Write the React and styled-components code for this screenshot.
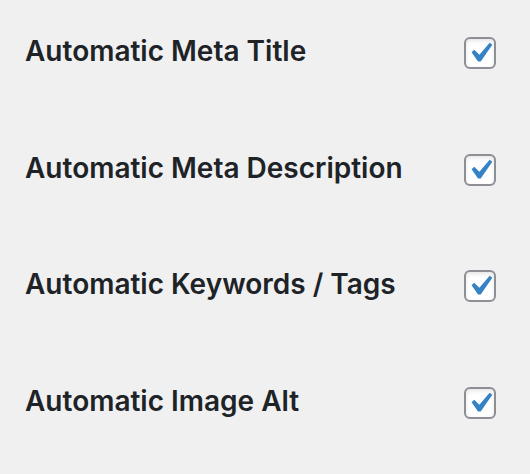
import React from "react";
import styled, { createGlobalStyle } from "styled-components";

const GlobalStyle = createGlobalStyle`
  html, body {
    margin: 0;
    padding: 0;
    background: #f0f0f1;
  }
  body {
    font-family: Inter, "Noto Sans", "Liberation Sans", sans-serif;
    color: #1d2327;
  }
`;

const Settings = styled.div`
  padding: 34px 34px 0 25px;
  width: 530px;
  height: 474px;
  box-sizing: border-box;
  overflow: hidden;
`;

const Row = styled.label`
  display: flex;
  align-items: flex-start;
  justify-content: space-between;
  height: 116.67px;
  cursor: pointer;
`;

const Title = styled.span`
  font-size: 28px;
  font-weight: 600;
  line-height: 34px;
`;

const Box = styled.span`
  position: relative;
  display: block;
  width: 32px;
  height: 32px;
  margin-top: 3px;
  box-sizing: border-box;
  border: 2px solid #8c8f94;
  border-radius: 6px;
  background: #fff;
  box-shadow: inset 0 2px 4px rgba(0, 0, 0, 0.1);

  svg {
    position: absolute;
    left: -6px;
    top: -6px;
    width: 40px;
    height: 40px;
  }
`;

const Checkbox = ({ checked }) => (
  <Box role="checkbox" aria-checked={checked}>
    {checked && (
      <svg viewBox="0 0 20 20">
        <path
          d="M14.83 4.89l1.34.94-5.81 8.38H9.02L5.78 9.67l1.34-1.25 2.57 2.4z"
          fill="#3582c4"
        />
      </svg>
    )}
  </Box>
);

const options = [
  "Automatic Meta Title",
  "Automatic Meta Description",
  "Automatic Keywords / Tags",
  "Automatic Image Alt",
];

export default function App() {
  return (
    <>
      <GlobalStyle />
      <Settings>
        {options.map((name) => (
          <Row key={name}>
            <Title>{name}</Title>
            <Checkbox checked />
          </Row>
        ))}
      </Settings>
    </>
  );
}
